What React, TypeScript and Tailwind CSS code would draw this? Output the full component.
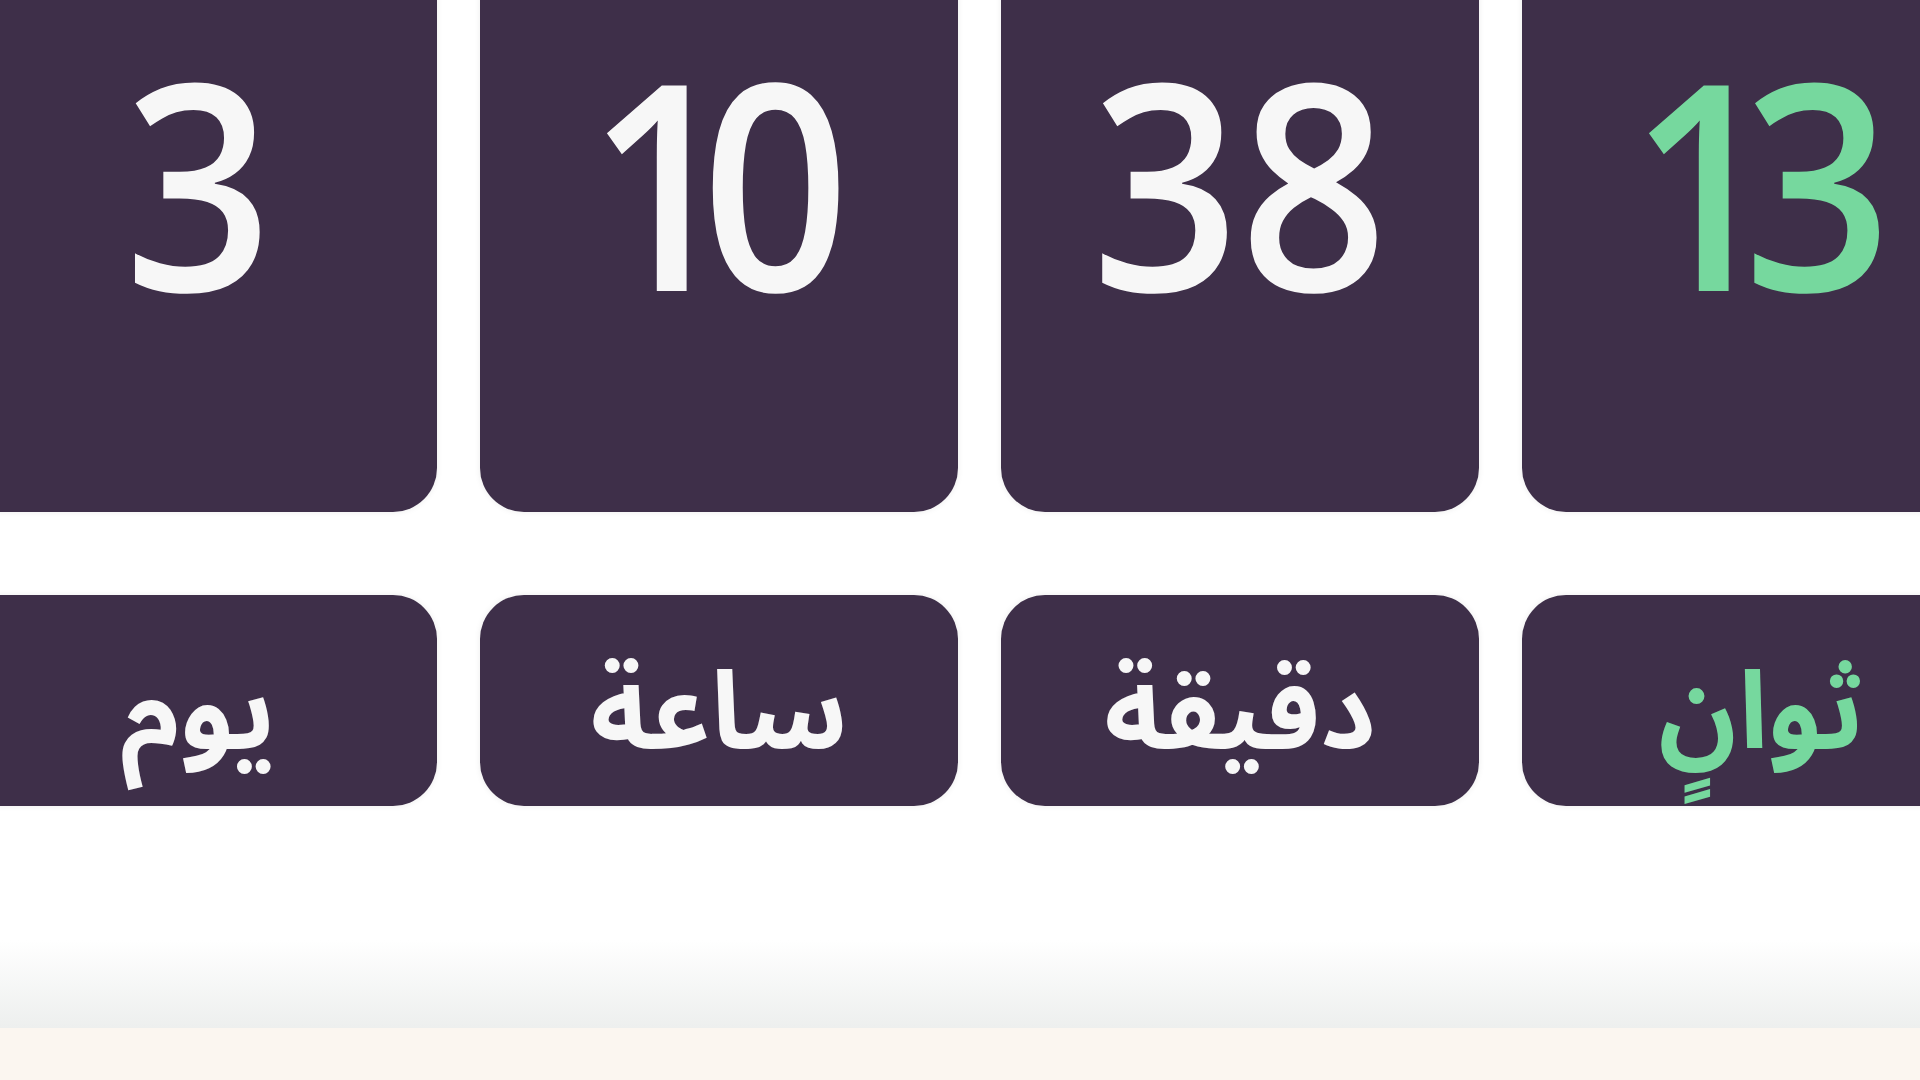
import React from "react";

const units = [
  { value: "3", label: "يوم", green: false },
  { value: "10", label: "ساعة", green: false },
  { value: "38", label: "دقيقة", green: false },
  { value: "13", label: "ثوانٍ", green: true },
];

export default function App() {
  return (
    <div className="relative flex h-[1080px] w-[1920px] flex-col overflow-hidden bg-white">
      <div className="ml-[-41px] mt-[-136px] flex gap-[43px]">
        {units.map((u) => (
          <div
            key={u.value}
            className="flex h-[648px] w-[478px] shrink-0 items-center justify-center rounded-[44px] bg-[#3e2f49] pb-[18px] shadow-[0_0_6px_rgba(0,0,0,0.08)]"
          >
            <div
              className={`flex scale-x-[0.9] text-[288px] font-semibold leading-none ${u.green ? "text-[#76d89e]" : "text-[#f7f7f7]"}`}
              style={{ fontFamily: '"Open Sans", "Noto Sans", sans-serif' }}
            >
              {u.value.split("").map((c, i) => (
                <span key={i} className={c === "1" ? "mr-[-38px]" : ""}>
                  {c}
                </span>
              ))}
            </div>
          </div>
        ))}
      </div>
      <div className="ml-[-41px] mt-[83px] flex gap-[43px]">
        {units.map((u) => (
          <div
            key={u.label}
            className="flex h-[211px] w-[478px] shrink-0 items-center justify-center rounded-[44px] bg-[#3e2f49] pt-[26px] shadow-[0_0_6px_rgba(0,0,0,0.08)]"
          >
            <span
              dir="rtl"
              className={`text-[108px] font-bold leading-none ${u.green ? "text-[#76d89e]" : "text-[#f7f7f7]"}`}
              style={{ fontFamily: '"Noto Sans Arabic", "DejaVu Sans", sans-serif' }}
            >
              {u.label}
            </span>
          </div>
        ))}
      </div>
      <div className="flex-1" />
      <div className="h-[88px] bg-gradient-to-b from-white to-[#edefee]" />
      <div className="h-[52px] bg-[#fbf6f0]" />
    </div>
  );
}
